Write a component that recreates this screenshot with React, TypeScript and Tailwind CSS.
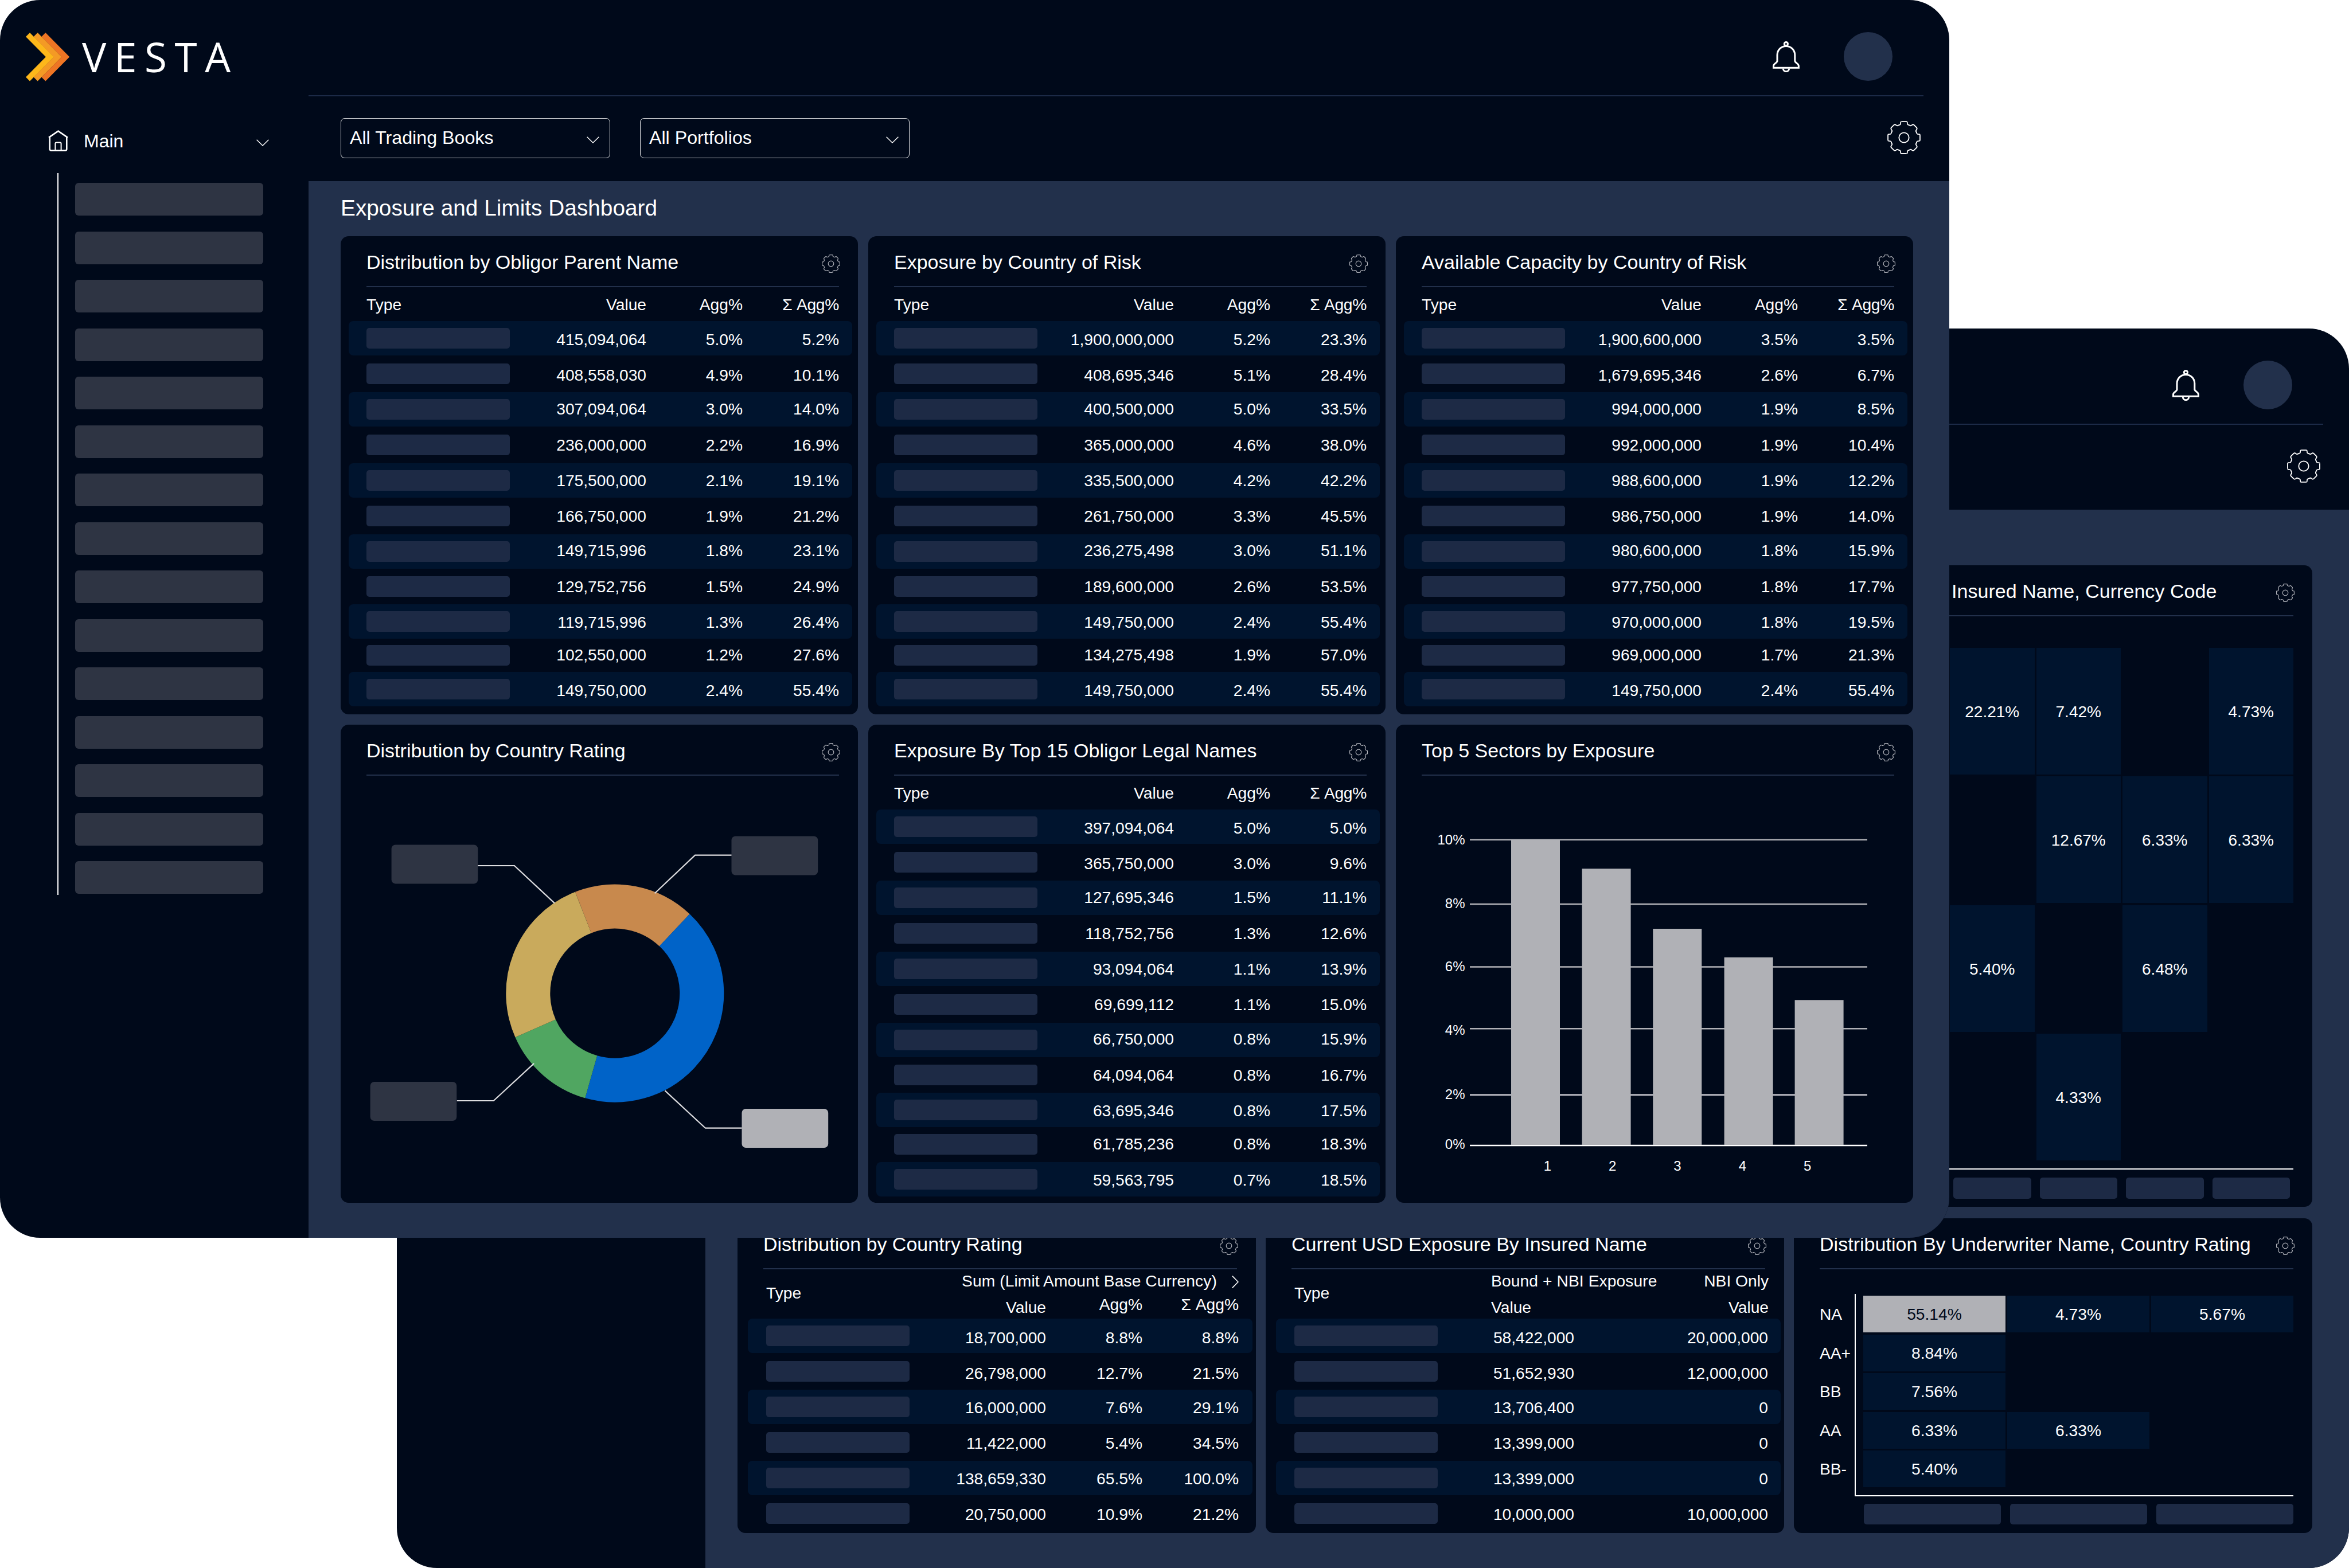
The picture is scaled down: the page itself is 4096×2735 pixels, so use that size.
import type { ReactNode } from "react"
import clsx from "clsx"

type Row = string[]

const obligorRows: Row[] = [
  ["415,094,064", "5.0%", "5.2%"],
  ["408,558,030", "4.9%", "10.1%"],
  ["307,094,064", "3.0%", "14.0%"],
  ["236,000,000", "2.2%", "16.9%"],
  ["175,500,000", "2.1%", "19.1%"],
  ["166,750,000", "1.9%", "21.2%"],
  ["149,715,996", "1.8%", "23.1%"],
  ["129,752,756", "1.5%", "24.9%"],
  ["119,715,996", "1.3%", "26.4%"],
  ["102,550,000", "1.2%", "27.6%"],
  ["149,750,000", "2.4%", "55.4%"]
]

const exposureRows: Row[] = [
  ["1,900,000,000", "5.2%", "23.3%"],
  ["408,695,346", "5.1%", "28.4%"],
  ["400,500,000", "5.0%", "33.5%"],
  ["365,000,000", "4.6%", "38.0%"],
  ["335,500,000", "4.2%", "42.2%"],
  ["261,750,000", "3.3%", "45.5%"],
  ["236,275,498", "3.0%", "51.1%"],
  ["189,600,000", "2.6%", "53.5%"],
  ["149,750,000", "2.4%", "55.4%"],
  ["134,275,498", "1.9%", "57.0%"],
  ["149,750,000", "2.4%", "55.4%"]
]

const capacityRows: Row[] = [
  ["1,900,600,000", "3.5%", "3.5%"],
  ["1,679,695,346", "2.6%", "6.7%"],
  ["994,000,000", "1.9%", "8.5%"],
  ["992,000,000", "1.9%", "10.4%"],
  ["988,600,000", "1.9%", "12.2%"],
  ["986,750,000", "1.9%", "14.0%"],
  ["980,600,000", "1.8%", "15.9%"],
  ["977,750,000", "1.8%", "17.7%"],
  ["970,000,000", "1.8%", "19.5%"],
  ["969,000,000", "1.7%", "21.3%"],
  ["149,750,000", "2.4%", "55.4%"]
]

const legalNameRows: Row[] = [
  ["397,094,064", "5.0%", "5.0%"],
  ["365,750,000", "3.0%", "9.6%"],
  ["127,695,346", "1.5%", "11.1%"],
  ["118,752,756", "1.3%", "12.6%"],
  ["93,094,064", "1.1%", "13.9%"],
  ["69,699,112", "1.1%", "15.0%"],
  ["66,750,000", "0.8%", "15.9%"],
  ["64,094,064", "0.8%", "16.7%"],
  ["63,695,346", "0.8%", "17.5%"],
  ["61,785,236", "0.8%", "18.3%"],
  ["59,563,795", "0.7%", "18.5%"]
]

const ratingRows: Row[] = [
  ["18,700,000", "8.8%", "8.8%"],
  ["26,798,000", "12.7%", "21.5%"],
  ["16,000,000", "7.6%", "29.1%"],
  ["11,422,000", "5.4%", "34.5%"],
  ["138,659,330", "65.5%", "100.0%"],
  ["20,750,000", "10.9%", "21.2%"]
]

const insuredRows: Row[] = [
  ["58,422,000", "20,000,000"],
  ["51,652,930", "12,000,000"],
  ["13,706,400", "0"],
  ["13,399,000", "0"],
  ["13,399,000", "0"],
  ["10,000,000", "10,000,000"]
]

// row height + where the figures sit in it
const longRows = [
  "h-[62px] pt-4",
  "h-[62px] pt-4",
  "h-[62px] pt-[13px]",
  "h-[62px] pt-[14px]",
  "h-[62px] pt-[14px]",
  "h-[62px] pt-[14px]",
  "h-[61px] pt-3",
  "h-[61px] pt-[14px]",
  "h-[59px] pt-[15px]",
  "h-[59px] pt-[13px]",
  "h-[60px] pt-4"
]

const legalNameSizes = [...longRows.slice(0, 8), "h-[60px] pt-[15px]", "h-[61px] pt-[13px]", "h-[60px] pt-[15px]"]

const shortRows = [
  "h-[62px] pt-[17px]",
  "h-[62px] pt-[17px]",
  "h-[62px] pt-[15px]",
  "h-[62px] pt-[15px]",
  "h-[62px] pt-[15px]",
  "h-[62px] pt-[15px]"
]

const insuredHeat = [
  ["22.21%", "7.42%", "", "4.73%"],
  ["", "12.67%", "6.33%", "6.33%"],
  ["5.40%", "", "6.48%", ""],
  ["", "4.33%", "", ""]
]

const underwriterHeat = [
  { label: "NA", cells: ["55.14%", "4.73%", "5.67%"] },
  { label: "AA+", cells: ["8.84%"] },
  { label: "BB", cells: ["7.56%"] },
  { label: "AA", cells: ["6.33%", "6.33%"] },
  { label: "BB-", cells: ["5.40%"] }
]

const slices = [
  { color: "#c8894d", start: -21.4, size: 64.7 },
  { color: "#0063c8", start: 43.3, size: 152.6 },
  { color: "#50a661", start: 195.9, size: 50.3 },
  { color: "#c9aa5c", start: 246.2, size: 92.4 }
]

const callouts = [
  { x: 88.6, y: 120.4, color: "#2e3443", line: "239.3,157 303,157 373,222.4" },
  { x: 681.5, y: 105.5, color: "#2e3443", line: "681.5,138.7 618,138.7 547.6,205.2" },
  { x: 51.6, y: 534, color: "#2e3443", line: "202.8,567 266.7,567 337.2,501.9" },
  { x: 699.5, y: 581, color: "#b0b1b6", line: "699.5,614.7 636,614.7 565.5,549.4" }
]

const ticks = [
  { label: "10%", y: 111.8, text: 119.9, color: "#b0b1b6" },
  { label: "8%", y: 224, text: 231, color: "#b0b1b6" },
  { label: "6%", y: 333.5, text: 340.8, color: "#b0b1b6" },
  { label: "4%", y: 441.2, text: 451.5, color: "#b0b1b6" },
  { label: "2%", y: 556.8, text: 564.3, color: "#d0cfd6" },
  { label: "0%", y: 645, text: 651, color: "#ffffff" }
]

const bars = [
  { x: 201, top: 111.5, labelX: 264.5 },
  { x: 324.6, top: 162.2, labelX: 377.7 },
  { x: 448.3, top: 267, labelX: 491 },
  { x: 572.6, top: 316.9, labelX: 604.4 },
  { x: 695.6, top: 391.3, labelX: 717.6 }
]

function Gear({ className, stroke }: { className: string; stroke: number }) {
  return (
    <svg viewBox="-110 -110 220 220" className={className} fill="none" stroke="currentColor" strokeWidth={stroke}>
      {[0, 90, 180, 270].map((deg) => (
        <path
          key={deg}
          transform={`rotate(${deg})`}
          d="M-17-106H17Q22-106 22-100Q22-88 26-86L42-79Q47-78 51-82Q60-89 66-84L84-66Q89-60 82-51Q78-47 79-42L86-26Q88-22 100-22Q106-22 106-17"
        />
      ))}
      <circle r="33" />
    </svg>
  )
}

function Bell() {
  return (
    <svg viewBox="0 0 47 54" className="mt-[72px] h-[54px] w-[47px]" fill="none" stroke="white" strokeWidth="3">
      <circle cx="23.4" cy="4.6" r="3.1" />
      <path d="M8 23.8a15.4 15.4 0 0 1 30.8 0V34.5Q39 36 42 38.2Q45.4 40.5 45.4 43V46.2H1.5V43Q1.5 40.5 5 38.2Q8 36 8 34.5Z" />
      <path d="M18.3 47.5a5.2 5.2 0 0 0 10.4 0" />
    </svg>
  )
}

function ChevronDown() {
  return (
    <svg viewBox="0 0 22 12" className="h-3 w-[22px]" fill="none" stroke="white" strokeWidth="1.4">
      <path d="M.6.8 11 11 21.4.8" />
    </svg>
  )
}

function Logo() {
  const chevron = "7,0 0,7 34.9,42.2 0,77.4 7,84.4 48.8,42.2"
  return (
    <svg viewBox="0 0 77 85" className="h-[85px] w-[77px]">
      <polygon points={chevron} fill="#ee7524" transform="translate(27.4 0)" />
      <polygon points={chevron} fill="#f49a25" transform="translate(13.6 0)" />
      <polygon points={chevron} fill="#fdb71a" />
    </svg>
  )
}

function Sidebar() {
  return (
    <>
      <div className="flex h-[227px] items-start pl-[45px] pt-[57px]">
        <Logo />
        <span className="ml-[21px] font-['Open_Sans',sans-serif] text-[71px] font-medium leading-[84px] tracking-[13.6px]">VESTA</span>
      </div>
      <div className="flex h-[75px] items-start pl-[84px]">
        <svg viewBox="0 0 35 37" className="h-[37px] w-[35px]" fill="none" stroke="white" strokeWidth="2.6">
          <path d="M1 12.8 17.5 1.6 34 12.8" />
          <path d="M2.7 12V33a2.5 2.5 0 0 0 2.5 2.5H29.8a2.5 2.5 0 0 0 2.5-2.5V12" />
          <path d="M12.4 35V23.5a2 2 0 0 1 2-2h6.2a2 2 0 0 1 2 2V35" strokeWidth="2" />
        </svg>
        <span className="ml-[27px] w-[301px] text-[32px] leading-[38px]">Main</span>
        <div className="mt-4">
          <ChevronDown />
        </div>
      </div>
      <div className="ml-[100px] flex h-[1259px] flex-col gap-[27.5px] border-l-2 border-white pl-[29px] pt-[17px]">
        {Array.from({ length: 15 }, (_, idx) => (
          <div key={idx} className="h-[57px] w-[328px] shrink-0 rounded-md bg-[#2e3443]" />
        ))}
      </div>
    </>
  )
}

function Select({ label }: { label: string }) {
  return (
    <div className="mt-[38px] flex h-[70px] w-[470px] items-start justify-between rounded-[7px] border-[1.5px] border-white/90 pl-[15px] pr-[18px]">
      <span className="mt-[14px] text-[32.2px] leading-[38px]">{label}</span>
      <div className="mt-[31px]">
        <ChevronDown />
      </div>
    </div>
  )
}

function AppWindow({ className, sidebar, filters, children }: { className: string; sidebar?: ReactNode; filters: string[]; children: ReactNode }) {
  return (
    <div className={clsx("absolute flex overflow-hidden rounded-[70px] bg-[#00091a]", className)}>
      <aside className="w-[538px] shrink-0">{sidebar}</aside>
      <div className="flex flex-1 flex-col">
        <div className="mr-[45px] flex h-[168px] shrink-0 items-start justify-end border-b-[2.5px] border-[#1c2a47] pr-[54px]">
          <Bell />
          <div className="ml-[77px] mt-14 size-[85px] rounded-full bg-[#22304b]" />
        </div>
        <div className="flex h-[148px] shrink-0 items-start gap-[52px] pl-14 pr-[50px]">
          {filters.map((label) => (
            <Select key={label} label={label} />
          ))}
          <Gear className="ml-auto mt-[43px] size-[58px]" stroke={7} />
        </div>
        <main className="flex-1 bg-[#22304b] pl-14 pt-6">{children}</main>
      </div>
    </div>
  )
}

function Card({ title, className, titleClass, children }: { title: string; className?: string; titleClass?: string; children: ReactNode }) {
  return (
    <section className={clsx("overflow-hidden rounded-[14px] bg-[#00091a]", className)}>
      <div className="ml-[45px] mr-[33px] flex h-[89px] items-start justify-between border-b-2 border-[#22304b] pt-[25px]">
        <h3 className={clsx("text-[34px] leading-10 whitespace-nowrap", titleClass)}>{title}</h3>
        <Gear className="-mr-[2px] mt-[7px] size-8 text-[#b5b7be]" stroke={8} />
      </div>
      {children}
    </section>
  )
}

function Rows({ rows, sizes, inset = false }: { rows: Row[]; sizes: string[]; inset?: boolean }) {
  return (
    <>
      {rows.map((row, idx) => (
        <div key={idx} className="relative">
          <div className={clsx("-mb-[60px] flex h-[60px] items-center rounded-lg", inset ? "pl-8" : "pl-[31px]", idx % 2 === 0 && "bg-[#00142e]")}>
            <div className="h-9 w-[250px] rounded-[5px] bg-[#1d2a45]" />
          </div>
          <div className={clsx("relative flex text-right text-[28.2px] leading-8", inset ? "pl-[282px]" : "pl-[281px]", sizes[idx])}>
            <span className="w-[238px]">{row[0]}</span>
            {row.length === 3 && <span className="w-[168px]">{row[1]}</span>}
            <span className={row.length === 3 ? "w-[168px]" : "w-[338px]"}>{row[row.length - 1]}</span>
          </div>
        </div>
      ))}
    </>
  )
}

function TableCard({ title, rows, sizes = longRows }: { title: string; rows: Row[]; sizes?: string[] }) {
  return (
    <Card title={title}>
      <div className="ml-[14px] mr-[10px]">
        <div className="flex h-[59px] pl-[31px] pt-[14px] text-right text-[28.2px] leading-8">
          <span className="w-[250px] text-left">Type</span>
          <span className="w-[238px]">Value</span>
          <span className="w-[168px]">Agg%</span>
          <span className="w-[168px] tracking-[-0.3px]">Σ Agg%</span>
        </div>
        <Rows rows={rows} sizes={sizes} />
      </div>
    </Card>
  )
}

function DonutCard() {
  return (
    <Card title="Distribution by Country Rating">
      <svg viewBox="0 0 902 745" className="h-[745px] w-[902px]" fill="none">
        {slices.map((slice) => (
          <circle
            key={slice.color}
            cx="478.3"
            cy="379.6"
            r="151.5"
            stroke={slice.color}
            strokeWidth="77"
            pathLength={360}
            strokeDasharray={`${slice.size} ${360 - slice.size}`}
            transform={`rotate(${slice.start - 90} 478.3 379.6)`}
          />
        ))}
        {callouts.map((item) => (
          <g key={item.line}>
            <rect x={item.x} y={item.y} width="150.7" height="68" rx="7" fill={item.color} />
            <polyline points={item.line} stroke="#dddde0" strokeWidth="2.2" />
          </g>
        ))}
      </svg>
    </Card>
  )
}

function BarsCard() {
  return (
    <Card title="Top 5 Sectors by Exposure">
      <svg viewBox="0 0 902 745" className="h-[745px] w-[902px] text-2xl" fill="white">
        {ticks.map((tick) => (
          <g key={tick.label}>
            <text x="120.5" y={tick.text} textAnchor="end">{tick.label}</text>
            <line x1="129" x2="822" y1={tick.y} y2={tick.y} stroke={tick.color} strokeWidth="2.4" />
          </g>
        ))}
        {bars.map((bar, idx) => (
          <g key={bar.x}>
            <rect x={bar.x} y={bar.top} width="85" height={644 - bar.top} fill="#b0b1b6" />
            <text x={bar.labelX} y="689.2" textAnchor="middle">{idx + 1}</text>
          </g>
        ))}
      </svg>
    </Card>
  )
}

function RatingCard() {
  return (
    <Card title="Distribution by Country Rating">
      <div className="ml-[18px] mr-[6px]">
        <div className="flex h-[86px] pl-8 pr-[24px] text-[28.2px] leading-8">
          <span className="mt-[25px]">Type</span>
          <div className="ml-auto">
            <div className="mt-[4px] flex items-start justify-end">
              <span className="tracking-[0.1px]">Sum (Limit Amount Base Currency)</span>
              <svg viewBox="0 0 12 22" className="ml-[26px] mt-[7px] h-[22px] w-3" fill="none" stroke="white" strokeWidth="1.6">
                <path d="M.8.6 11 11 .8 21.4" />
              </svg>
            </div>
            <div className="mt-[9px] flex justify-end text-right">
              <span className="mt-[5px]">Value</span>
              <span className="w-[168px]">Agg%</span>
              <span className="w-[168px]">Σ Agg%</span>
            </div>
          </div>
        </div>
        <Rows rows={ratingRows} sizes={shortRows} inset />
      </div>
    </Card>
  )
}

function InsuredCard() {
  return (
    <Card title="Current USD Exposure By Insured Name">
      <div className="ml-[18px] mr-[6px]">
        <div className="flex h-[86px] pl-8 pr-[21px] text-[28.2px] leading-8">
          <span className="mt-[25px]">Type</span>
          <div className="ml-auto w-[484px] pt-[4px]">
            <div className="flex justify-between">
              <span className="tracking-[0.1px]">Bound + NBI Exposure</span>
              <span>NBI Only</span>
            </div>
            <div className="mt-[14px] flex justify-between">
              <span>Value</span>
              <span>Value</span>
            </div>
          </div>
        </div>
        <Rows rows={insuredRows} sizes={shortRows} inset />
      </div>
    </Card>
  )
}

function InsuredHeatCard() {
  return (
    <Card title="Insured Name, Currency Code" titleClass="pl-[230px] tracking-[0.05px]" className="col-start-3">
      <div className="mt-[55px] flex flex-col items-end gap-[3.4px] pr-[33px]">
        {insuredHeat.map((cells, idx) => (
          <div key={idx} className="flex gap-[3px]">
            {cells.map((cell, col) => (
              <div
                key={col}
                className={clsx("flex h-[221px] w-[147.5px] items-center justify-center pt-[3px] text-[28px]", cell && "bg-[#00142e]")}
              >
                {cell}
              </div>
            ))}
          </div>
        ))}
      </div>
      <div className="ml-[105px] mr-[33px] mt-[14px] h-[2px] bg-white" />
      <div className="mr-[39px] mt-[14px] flex justify-end gap-[15px]">
        {[0, 1, 2, 3].map((idx) => (
          <div key={idx} className="h-[37px] w-[135.5px] rounded-[5px] bg-[#1d2a45]" />
        ))}
      </div>
    </Card>
  )
}

function UnderwriterHeatCard() {
  return (
    <Card title="Distribution By Underwriter Name, Country Rating" titleClass="tracking-[0.03px]">
      <div className="ml-[45px] mr-[33px] mt-[43px] flex text-[28.2px] leading-8">
        <div className="flex w-[61px] flex-col gap-[3.6px] pt-[3px]">
          {underwriterHeat.map((row) => (
            <div key={row.label} className="flex h-16 items-center">{row.label}</div>
          ))}
        </div>
        <div className="flex h-[353px] flex-1 flex-col gap-[3.6px] border-b-2 border-l-2 border-white pl-[13px] pt-[3px]">
          {underwriterHeat.map((row, idx) => (
            <div key={row.label} className="flex gap-[3px]">
              {row.cells.map((cell, col) => (
                <div
                  key={col}
                  className={clsx(
                    "flex h-16 w-[248px] items-center justify-center",
                    idx === 0 && col === 0 ? "bg-[#b0b1b6] text-[#00091a]" : "bg-[#00142e]"
                  )}
                >
                  {cell}
                </div>
              ))}
            </div>
          ))}
        </div>
      </div>
      <div className="mr-[33px] mt-[13px] flex justify-end gap-[15.5px]">
        {[0, 1, 2].map((idx) => (
          <div key={idx} className="h-9 w-[239.5px] rounded-[5px] bg-[#1d2a45]" />
        ))}
      </div>
    </Card>
  )
}

export default function App() {
  return (
    <div className="relative h-[2735px] w-[4096px] overflow-hidden bg-white font-['Liberation_Sans',Arial,sans-serif] text-white">
      <AppWindow className="left-[692px] top-[573px] h-[2162px] w-[3404px]" filters={[]}>
        <div className="mt-[73px] grid grid-cols-[904px_904px_904px] grid-rows-[1119px_549px] gap-x-[17px] gap-y-5">
          <InsuredHeatCard />
          <RatingCard />
          <InsuredCard />
          <UnderwriterHeatCard />
        </div>
      </AppWindow>

      <AppWindow
        className="left-0 top-0 h-[2159px] w-[3399px]"
        sidebar={<Sidebar />}
        filters={["All Trading Books", "All Portfolios"]}
      >
        <h2 className="mb-[26px] text-[38.8px] leading-[46px]">Exposure and Limits Dashboard</h2>
        <div className="grid grid-cols-[902px_902px_902px] grid-rows-[834px_834px] gap-[18px]">
          <TableCard title="Distribution by Obligor Parent Name" rows={obligorRows} />
          <TableCard title="Exposure by Country of Risk" rows={exposureRows} />
          <TableCard title="Available Capacity by Country of Risk" rows={capacityRows} />
          <DonutCard />
          <TableCard title="Exposure By Top 15 Obligor Legal Names" rows={legalNameRows} sizes={legalNameSizes} />
          <BarsCard />
        </div>
      </AppWindow>
    </div>
  )
}
